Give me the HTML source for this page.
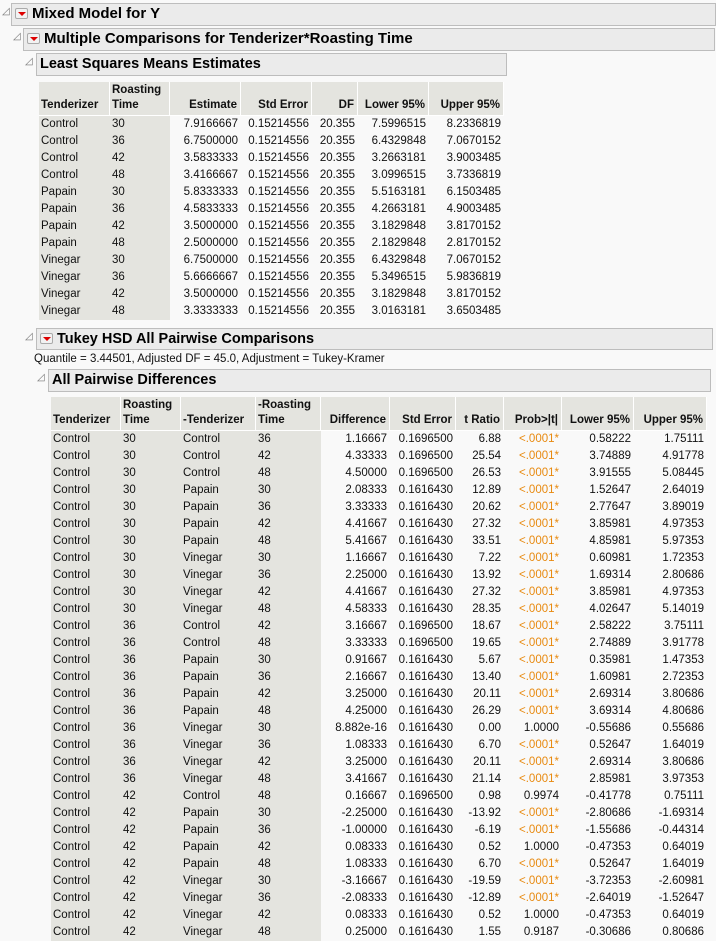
<!DOCTYPE html>
<html><head><meta charset="utf-8"><style>
body{margin:0;background:#f9f9f9;font-family:"Liberation Sans",sans-serif;font-size:11.5px;color:#111;width:716px;height:938px;overflow:hidden;position:relative}
.box{position:absolute;background:#ebebeb;border:1px solid #bdbdbd;box-sizing:border-box;font-weight:bold;font-size:15px;line-height:20px;padding-left:20px;color:#000}
.box.s{font-size:14.5px}
.disc{position:absolute;font-size:10px;color:#777}
.rb{position:absolute;left:3px;top:4px;width:13px;height:11px;background:#f2f2f2;border:1px solid #aaa;border-radius:2px;box-sizing:border-box}
.rb:after{content:"";position:absolute;left:2px;top:3px;border-left:4px solid transparent;border-right:4px solid transparent;border-top:4px solid #d00}
table{position:absolute;border-collapse:separate;border-spacing:0;table-layout:fixed}
th{background:#e4e4df;font-weight:bold;text-align:right;vertical-align:bottom;line-height:15px;padding:1px 3px 2px 2px;border-right:1px solid #fff;border-bottom:1px solid #fff;height:33px;box-sizing:border-box}
th.l{text-align:left}
td{height:17px;line-height:17px;padding:0 3px 0 2px;text-align:right;white-space:nowrap;overflow:hidden}
td.l{text-align:left;background:#e4e4df}
.o{color:#e88a10}
</style></head><body>

<span class="disc" style="left:2px;top:6px">◿</span>
<div class="box" style="left:11px;top:3px;width:705px;height:23px"><div class="rb"></div>Mixed Model for Y</div>
<span class="disc" style="left:13px;top:31px">◿</span>
<div class="box" style="left:23px;top:28px;width:692px;height:23px"><div class="rb"></div>Multiple Comparisons for Tenderizer*Roasting Time</div>
<span class="disc" style="left:25px;top:56px">◿</span>
<div class="box s" style="left:36px;top:53px;width:471px;height:23px;padding-left:3px">Least Squares Means Estimates</div>

<table style="left:39px;top:82px;width:465px">
<colgroup><col style="width:71px"><col style="width:60px"><col style="width:71px"><col style="width:71px"><col style="width:46px"><col style="width:71px"><col style="width:75px"></colgroup>
<tr><th class="l">Tenderizer</th><th class="l">Roasting<br>Time</th><th>Estimate</th><th>Std Error</th><th>DF</th><th>Lower 95%</th><th>Upper 95%</th></tr>
<tr><td class="l">Control</td><td class="l">30</td><td>7.9166667</td><td>0.15214556</td><td>20.355</td><td>7.5996515</td><td>8.2336819</td></tr>
<tr><td class="l">Control</td><td class="l">36</td><td>6.7500000</td><td>0.15214556</td><td>20.355</td><td>6.4329848</td><td>7.0670152</td></tr>
<tr><td class="l">Control</td><td class="l">42</td><td>3.5833333</td><td>0.15214556</td><td>20.355</td><td>3.2663181</td><td>3.9003485</td></tr>
<tr><td class="l">Control</td><td class="l">48</td><td>3.4166667</td><td>0.15214556</td><td>20.355</td><td>3.0996515</td><td>3.7336819</td></tr>
<tr><td class="l">Papain</td><td class="l">30</td><td>5.8333333</td><td>0.15214556</td><td>20.355</td><td>5.5163181</td><td>6.1503485</td></tr>
<tr><td class="l">Papain</td><td class="l">36</td><td>4.5833333</td><td>0.15214556</td><td>20.355</td><td>4.2663181</td><td>4.9003485</td></tr>
<tr><td class="l">Papain</td><td class="l">42</td><td>3.5000000</td><td>0.15214556</td><td>20.355</td><td>3.1829848</td><td>3.8170152</td></tr>
<tr><td class="l">Papain</td><td class="l">48</td><td>2.5000000</td><td>0.15214556</td><td>20.355</td><td>2.1829848</td><td>2.8170152</td></tr>
<tr><td class="l">Vinegar</td><td class="l">30</td><td>6.7500000</td><td>0.15214556</td><td>20.355</td><td>6.4329848</td><td>7.0670152</td></tr>
<tr><td class="l">Vinegar</td><td class="l">36</td><td>5.6666667</td><td>0.15214556</td><td>20.355</td><td>5.3496515</td><td>5.9836819</td></tr>
<tr><td class="l">Vinegar</td><td class="l">42</td><td>3.5000000</td><td>0.15214556</td><td>20.355</td><td>3.1829848</td><td>3.8170152</td></tr>
<tr><td class="l">Vinegar</td><td class="l">48</td><td>3.3333333</td><td>0.15214556</td><td>20.355</td><td>3.0163181</td><td>3.6503485</td></tr>
</table>

<span class="disc" style="left:25px;top:331px">◿</span>
<div class="box s" style="left:36px;top:328px;width:677px;height:22px"><div class="rb"></div>Tukey HSD All Pairwise Comparisons</div>
<div style="position:absolute;left:34px;top:351px;font-size:11.5px;line-height:16px">Quantile = 3.44501, Adjusted DF = 45.0, Adjustment = Tukey-Kramer</div>
<span class="disc" style="left:37px;top:372px">◿</span>
<div class="box s" style="left:48px;top:369px;width:663px;height:23px;padding-left:3px">All Pairwise Differences</div>

<table style="left:51px;top:397px;width:656px">
<colgroup><col style="width:70px"><col style="width:60px"><col style="width:75px"><col style="width:65px"><col style="width:69px"><col style="width:66px"><col style="width:48px"><col style="width:58px"><col style="width:72px"><col style="width:73px"></colgroup>
<tr><th class="l">Tenderizer</th><th class="l">Roasting<br>Time</th><th class="l">-Tenderizer</th><th class="l">-Roasting<br>Time</th><th>Difference</th><th>Std Error</th><th>t Ratio</th><th>Prob&gt;|t|</th><th>Lower 95%</th><th>Upper 95%</th></tr>
<tr><td class="l">Control</td><td class="l">30</td><td class="l">Control</td><td class="l">36</td><td>1.16667</td><td>0.1696500</td><td>6.88</td><td class="o">&lt;.0001*</td><td>0.58222</td><td>1.75111</td></tr>
<tr><td class="l">Control</td><td class="l">30</td><td class="l">Control</td><td class="l">42</td><td>4.33333</td><td>0.1696500</td><td>25.54</td><td class="o">&lt;.0001*</td><td>3.74889</td><td>4.91778</td></tr>
<tr><td class="l">Control</td><td class="l">30</td><td class="l">Control</td><td class="l">48</td><td>4.50000</td><td>0.1696500</td><td>26.53</td><td class="o">&lt;.0001*</td><td>3.91555</td><td>5.08445</td></tr>
<tr><td class="l">Control</td><td class="l">30</td><td class="l">Papain</td><td class="l">30</td><td>2.08333</td><td>0.1616430</td><td>12.89</td><td class="o">&lt;.0001*</td><td>1.52647</td><td>2.64019</td></tr>
<tr><td class="l">Control</td><td class="l">30</td><td class="l">Papain</td><td class="l">36</td><td>3.33333</td><td>0.1616430</td><td>20.62</td><td class="o">&lt;.0001*</td><td>2.77647</td><td>3.89019</td></tr>
<tr><td class="l">Control</td><td class="l">30</td><td class="l">Papain</td><td class="l">42</td><td>4.41667</td><td>0.1616430</td><td>27.32</td><td class="o">&lt;.0001*</td><td>3.85981</td><td>4.97353</td></tr>
<tr><td class="l">Control</td><td class="l">30</td><td class="l">Papain</td><td class="l">48</td><td>5.41667</td><td>0.1616430</td><td>33.51</td><td class="o">&lt;.0001*</td><td>4.85981</td><td>5.97353</td></tr>
<tr><td class="l">Control</td><td class="l">30</td><td class="l">Vinegar</td><td class="l">30</td><td>1.16667</td><td>0.1616430</td><td>7.22</td><td class="o">&lt;.0001*</td><td>0.60981</td><td>1.72353</td></tr>
<tr><td class="l">Control</td><td class="l">30</td><td class="l">Vinegar</td><td class="l">36</td><td>2.25000</td><td>0.1616430</td><td>13.92</td><td class="o">&lt;.0001*</td><td>1.69314</td><td>2.80686</td></tr>
<tr><td class="l">Control</td><td class="l">30</td><td class="l">Vinegar</td><td class="l">42</td><td>4.41667</td><td>0.1616430</td><td>27.32</td><td class="o">&lt;.0001*</td><td>3.85981</td><td>4.97353</td></tr>
<tr><td class="l">Control</td><td class="l">30</td><td class="l">Vinegar</td><td class="l">48</td><td>4.58333</td><td>0.1616430</td><td>28.35</td><td class="o">&lt;.0001*</td><td>4.02647</td><td>5.14019</td></tr>
<tr><td class="l">Control</td><td class="l">36</td><td class="l">Control</td><td class="l">42</td><td>3.16667</td><td>0.1696500</td><td>18.67</td><td class="o">&lt;.0001*</td><td>2.58222</td><td>3.75111</td></tr>
<tr><td class="l">Control</td><td class="l">36</td><td class="l">Control</td><td class="l">48</td><td>3.33333</td><td>0.1696500</td><td>19.65</td><td class="o">&lt;.0001*</td><td>2.74889</td><td>3.91778</td></tr>
<tr><td class="l">Control</td><td class="l">36</td><td class="l">Papain</td><td class="l">30</td><td>0.91667</td><td>0.1616430</td><td>5.67</td><td class="o">&lt;.0001*</td><td>0.35981</td><td>1.47353</td></tr>
<tr><td class="l">Control</td><td class="l">36</td><td class="l">Papain</td><td class="l">36</td><td>2.16667</td><td>0.1616430</td><td>13.40</td><td class="o">&lt;.0001*</td><td>1.60981</td><td>2.72353</td></tr>
<tr><td class="l">Control</td><td class="l">36</td><td class="l">Papain</td><td class="l">42</td><td>3.25000</td><td>0.1616430</td><td>20.11</td><td class="o">&lt;.0001*</td><td>2.69314</td><td>3.80686</td></tr>
<tr><td class="l">Control</td><td class="l">36</td><td class="l">Papain</td><td class="l">48</td><td>4.25000</td><td>0.1616430</td><td>26.29</td><td class="o">&lt;.0001*</td><td>3.69314</td><td>4.80686</td></tr>
<tr><td class="l">Control</td><td class="l">36</td><td class="l">Vinegar</td><td class="l">30</td><td>8.882e-16</td><td>0.1616430</td><td>0.00</td><td>1.0000</td><td>-0.55686</td><td>0.55686</td></tr>
<tr><td class="l">Control</td><td class="l">36</td><td class="l">Vinegar</td><td class="l">36</td><td>1.08333</td><td>0.1616430</td><td>6.70</td><td class="o">&lt;.0001*</td><td>0.52647</td><td>1.64019</td></tr>
<tr><td class="l">Control</td><td class="l">36</td><td class="l">Vinegar</td><td class="l">42</td><td>3.25000</td><td>0.1616430</td><td>20.11</td><td class="o">&lt;.0001*</td><td>2.69314</td><td>3.80686</td></tr>
<tr><td class="l">Control</td><td class="l">36</td><td class="l">Vinegar</td><td class="l">48</td><td>3.41667</td><td>0.1616430</td><td>21.14</td><td class="o">&lt;.0001*</td><td>2.85981</td><td>3.97353</td></tr>
<tr><td class="l">Control</td><td class="l">42</td><td class="l">Control</td><td class="l">48</td><td>0.16667</td><td>0.1696500</td><td>0.98</td><td>0.9974</td><td>-0.41778</td><td>0.75111</td></tr>
<tr><td class="l">Control</td><td class="l">42</td><td class="l">Papain</td><td class="l">30</td><td>-2.25000</td><td>0.1616430</td><td>-13.92</td><td class="o">&lt;.0001*</td><td>-2.80686</td><td>-1.69314</td></tr>
<tr><td class="l">Control</td><td class="l">42</td><td class="l">Papain</td><td class="l">36</td><td>-1.00000</td><td>0.1616430</td><td>-6.19</td><td class="o">&lt;.0001*</td><td>-1.55686</td><td>-0.44314</td></tr>
<tr><td class="l">Control</td><td class="l">42</td><td class="l">Papain</td><td class="l">42</td><td>0.08333</td><td>0.1616430</td><td>0.52</td><td>1.0000</td><td>-0.47353</td><td>0.64019</td></tr>
<tr><td class="l">Control</td><td class="l">42</td><td class="l">Papain</td><td class="l">48</td><td>1.08333</td><td>0.1616430</td><td>6.70</td><td class="o">&lt;.0001*</td><td>0.52647</td><td>1.64019</td></tr>
<tr><td class="l">Control</td><td class="l">42</td><td class="l">Vinegar</td><td class="l">30</td><td>-3.16667</td><td>0.1616430</td><td>-19.59</td><td class="o">&lt;.0001*</td><td>-3.72353</td><td>-2.60981</td></tr>
<tr><td class="l">Control</td><td class="l">42</td><td class="l">Vinegar</td><td class="l">36</td><td>-2.08333</td><td>0.1616430</td><td>-12.89</td><td class="o">&lt;.0001*</td><td>-2.64019</td><td>-1.52647</td></tr>
<tr><td class="l">Control</td><td class="l">42</td><td class="l">Vinegar</td><td class="l">42</td><td>0.08333</td><td>0.1616430</td><td>0.52</td><td>1.0000</td><td>-0.47353</td><td>0.64019</td></tr>
<tr><td class="l">Control</td><td class="l">42</td><td class="l">Vinegar</td><td class="l">48</td><td>0.25000</td><td>0.1616430</td><td>1.55</td><td>0.9187</td><td>-0.30686</td><td>0.80686</td></tr>
</table>
</body></html>
